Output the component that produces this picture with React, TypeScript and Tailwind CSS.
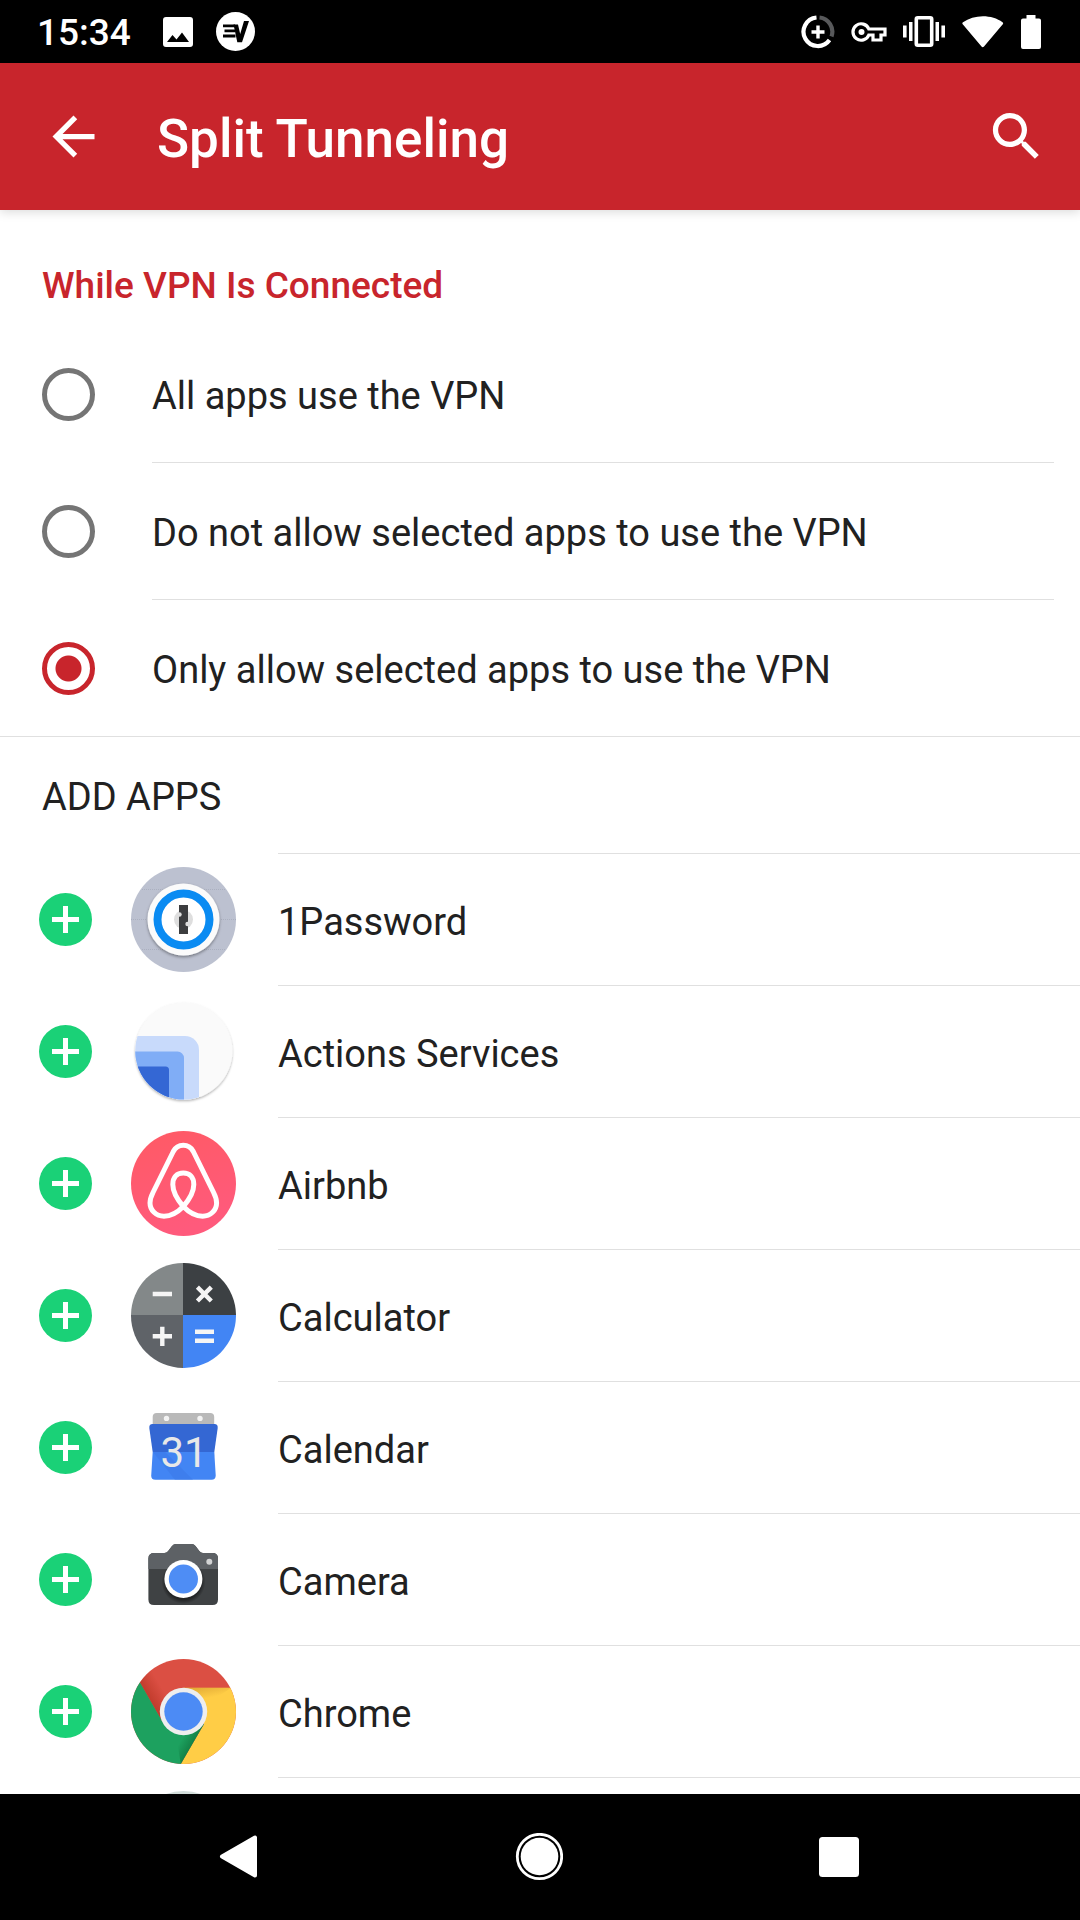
import React, { useState } from "react";

const options = [
  "All apps use the VPN",
  "Do not allow selected apps to use the VPN",
  "Only allow selected apps to use the VPN",
];

function OnePasswordIcon() {
  return (
    <>
      <defs>
        <filter id="op-shadow" x="-20%" y="-20%" width="140%" height="140%">
          <feDropShadow dx="0" dy="1.5" stdDeviation="1.5" floodOpacity="0.4" />
        </filter>
      </defs>
      <circle cx="52.5" cy="52.5" r="52.5" fill="#bcc1d0" />
      <path d="M0 52.5H105M11 22.5H94M11 82.5H94" stroke="#abb0c0" strokeWidth="1" strokeDasharray="1 1" />
      <circle cx="52.5" cy="52.5" r="36" fill="#fbfbfb" filter="url(#op-shadow)" />
      <circle cx="52.5" cy="52.5" r="26" fill="#fff" stroke="#0a8bf2" strokeWidth="8" />
      <circle cx="52.5" cy="52.5" r="9.5" fill="#dedede" />
      <rect x="48" y="38" width="9" height="29" fill="#3c3d3f" />
      <circle cx="48.5" cy="47.5" r="2.2" fill="#dedede" />
      <circle cx="56.5" cy="57" r="2.2" fill="#dedede" />
    </>
  );
}

function ActionsIcon() {
  return (
    <>
      <defs>
        <clipPath id="act-clip">
          <circle cx="52.8" cy="52" r="48.6" />
        </clipPath>
        <filter id="act-shadow" x="-20%" y="-20%" width="140%" height="140%">
          <feDropShadow dx="0" dy="1.5" stdDeviation="1" floodOpacity="0.3" />
        </filter>
      </defs>
      <circle cx="52.8" cy="52" r="48.6" fill="#fafafa" filter="url(#act-shadow)" />
      <g clipPath="url(#act-clip)">
        <path d="M0 37H54a14 14 0 0 1 14 14V105H0Z" fill="#c8dafb" />
        <path d="M0 52.5H46.5a6.5 6.5 0 0 1 6.5 6.5V105H0Z" fill="#80adf6" />
        <path d="M0 67.5H34.5a3.5 3.5 0 0 1 3.5 3.5V105H0Z" fill="#3467d4" />
      </g>
    </>
  );
}

function AirbnbIcon() {
  return (
    <>
      <defs>
        <linearGradient id="bnb" x1="0" y1="0" x2="0.3" y2="1">
          <stop offset="0" stopColor="#ff5a64" />
          <stop offset="1" stopColor="#ff5a7c" />
        </linearGradient>
      </defs>
      <circle cx="52.5" cy="52.5" r="52.5" fill="url(#bnb)" />
      <path
        d="M52.3 75.5C46 82 40 85.2 33 85.2C25 85.2 19 79.2 19 72C19 68 20 65.500 22 61.5L42.3 20.5C44.5 16.3 48 14.3 52.3 14.3C56.6 14.3 60.1 16.3 62.3 20.5L82.6 61.5C84.6 65.5 85.6 68 85.6 72C85.6 79.2 79.6 85.2 71.6 85.2C64.6 85.2 58.6 82 52.3 75.5C45 67 41.8 60 41.8 53.5C41.8 46 46 42 52.3 42C58.6 42 62.8 46 62.8 53.5C62.8 60 59.6 67 52.3 75.5Z"
        fill="none"
        stroke="#fff"
        strokeWidth="5"
        strokeLinejoin="round"
      />
    </>
  );
}

function CalculatorIcon() {
  return (
    <>
      <path d="M52 0A52.5 52.5 0 0 0 0 52H52Z" fill="#838889" />
      <path d="M52 0A52.5 52.5 0 0 1 105 52H52Z" fill="#3c4043" />
      <path d="M0 52A52.5 52.5 0 0 0 52 105V52Z" fill="#5f6368" />
      <path d="M105 52A52.5 52.5 0 0 1 52 105V52Z" fill="#4285f4" />
      <path
        d="M21.7 31H41M66.4 24.1L80.3 38M80.3 24.1L66.4 38M21.7 73.3H41M31.3 63.7V83M64 68.7H83M64 77.7H83"
        stroke="#f5f5f5"
        strokeWidth="4.4"
      />
    </>
  );
}

function CalendarIcon() {
  return (
    <>
      <rect x="21.7" y="18" width="61.5" height="18" rx="4" fill="#b9b9b9" />
      <circle cx="35.5" cy="23.4" r="2.7" fill="#f3f3f3" />
      <circle cx="69" cy="23.4" r="2.7" fill="#f3f3f3" />
      <path d="M21.5 29H83.5Q87 29 86.7 33L83.3 57H21.7L18.3 33Q18 29 21.5 29Z" fill="#3467d3" />
      <path d="M21.7 57H83.3L84.7 80.5Q84.7 84.7 80.5 84.7H24.5Q20 84.7 20.2 80.5Z" fill="#4285f4" />
      <path d="M22 57H34L62 84.7H44Z" fill="#3a77e6" opacity="0.5" />
      <text x="53" y="72.3" textAnchor="middle" fontFamily="Roboto, sans-serif" fontSize="42" fill="#e8e8e8">
        31
      </text>
    </>
  );
}

function CameraIcon() {
  return (
    <>
      <defs>
        <clipPath id="cam">
          <path d="M23.3 26H33.5Q35.7 26 37 24.3L41 19Q42.5 17 45 17H60.5Q63 17 64.5 19L68.5 24.3Q69.7 26 72 26H81.5Q87 26 87 31.5V72.5Q87 78 81.5 78H23Q17.4 78 17.4 72.5V31.5Q17.4 26 23.3 26Z" />
        </clipPath>
        <radialGradient id="cam-shade">
          <stop offset="0.8" stopColor="#000" stopOpacity="0.45" />
          <stop offset="1" stopColor="#000" stopOpacity="0" />
        </radialGradient>
      </defs>
      <g clipPath="url(#cam)">
        <rect width="105" height="105" fill="#3f4244" />
        <rect width="105" height="42" fill="#5d6165" />
        <circle cx="52.5" cy="55" r="22" fill="url(#cam-shade)" />
      </g>
      <circle cx="52.4" cy="52" r="19" fill="#fff" />
      <circle cx="52.4" cy="52" r="14.6" fill="#4e8df5" />
      <circle cx="78.3" cy="34.7" r="3" fill="#d2d3d4" />
    </>
  );
}

function ChromeIcon() {
  return (
    <>
      <defs>
        <clipPath id="chr">
          <circle cx="52.5" cy="52.5" r="52.5" />
        </clipPath>
        <linearGradient id="chr-red" gradientUnits="userSpaceOnUse" x1="19" y1="43" x2="34" y2="34">
          <stop offset="0" stopColor="#a52714" stopOpacity="0.5" />
          <stop offset="1" stopColor="#a52714" stopOpacity="0" />
        </linearGradient>
        <linearGradient id="chr-yel" gradientUnits="userSpaceOnUse" x1="60" y1="28" x2="63" y2="42">
          <stop offset="0" stopColor="#b87a20" stopOpacity="0.45" />
          <stop offset="1" stopColor="#b87a20" stopOpacity="0" />
        </linearGradient>
        <linearGradient id="chr-grn" gradientUnits="userSpaceOnUse" x1="62" y1="84" x2="52" y2="78">
          <stop offset="0" stopColor="#055524" stopOpacity="0.4" />
          <stop offset="1" stopColor="#055524" stopOpacity="0" />
        </linearGradient>
      </defs>
      <g clipPath="url(#chr)">
        <rect width="105" height="105" fill="#db4f43" />
        <path d="M9 23.5L31 62L52.5 52.5V28.7L40 0H0Z" fill="url(#chr-red)" />
        <path d="M52.5 28.7H105V105H49.8L73 65Z" fill="#ffcd46" />
        <path d="M52.5 28.7H100L75 46Z" fill="url(#chr-yel)" />
        <path d="M0 8L9 23.5L31 62L73 65L49.8 105H0Z" fill="#1da15f" />
        <path d="M45 75L73 65L49.8 105Z" fill="url(#chr-grn)" />
      </g>
      <circle cx="52.5" cy="52.5" r="23.7" fill="#eee" />
      <circle cx="52.5" cy="52.5" r="19.2" fill="#4c8bf5" />
    </>
  );
}

function PaleIcon() {
  return <circle cx="52.5" cy="52.5" r="52.5" fill="#d3dedb" />;
}

const apps = [
  { name: "1Password", Icon: OnePasswordIcon },
  { name: "Actions Services", Icon: ActionsIcon },
  { name: "Airbnb", Icon: AirbnbIcon },
  { name: "Calculator", Icon: CalculatorIcon },
  { name: "Calendar", Icon: CalendarIcon },
  { name: "Camera", Icon: CameraIcon },
  { name: "Chrome", Icon: ChromeIcon },
  { name: "", Icon: PaleIcon },
];

function StatusBar() {
  return (
    <div className="flex h-[63px] shrink-0 items-center justify-between bg-black pr-[39px] pl-[37px] text-white">
      <div className="flex items-center">
        <span className="w-[126px] pt-0.5 text-[37px] leading-[44px] font-medium">15:34</span>
        <svg className="mr-[23px] size-[30px]" viewBox="0 0 30 30" aria-hidden="true">
          <path
            fillRule="evenodd"
            fill="#fff"
            d="M3 0H27Q30 0 30 3V27Q30 30 27 30H3Q0 30 0 27V3Q0 0 3 0ZM4 25H26L19 15.5L13.5 22.5L9.5 18Z"
          />
        </svg>
        <svg className="size-[39px]" viewBox="0 0 39 39" aria-hidden="true">
          <circle cx="19.5" cy="19.5" r="19.5" fill="#fff" />
          <path d="M7 13.8H19M8.5 18.9H19M7 24H19.5" stroke="#000" strokeWidth="2.8" />
          <path d="M17.5 12.4H22L24.2 22L28 9H33L26 30.2H21.3Z" />
        </svg>
      </div>
      <div className="flex items-center gap-4">
        <svg className="h-[34px] w-[34px]" viewBox="0 0 34 34" fill="none" aria-hidden="true">
          <path d="M15.5 2.5A14.3 14.3 0 1 0 28.5 25" stroke="#fff" strokeWidth="4.2" />
          <path d="M18.5 2.5A14.3 14.3 0 0 1 30.5 21.5" stroke="#58595b" strokeWidth="4.2" />
          <path d="M10.5 17H23.5M17 10.5V23.5" stroke="#fff" strokeWidth="3.4" />
        </svg>
        <svg className="h-[20px] w-[36px]" viewBox="0 0 36 20" fill="none" aria-hidden="true">
          <path d="M17.8 7A8.2 8.2 0 1 0 17.8 13H22V18H30V13H34V7Z" stroke="#fff" strokeWidth="3.2" />
          <circle cx="10.5" cy="10" r="3" fill="#fff" />
        </svg>
        <svg className="h-[31px] w-[42px]" viewBox="0 0 42 31" fill="#fff" aria-hidden="true">
          <path d="M0 9.500H3.6V21.5H0ZM6 6H9.5V25H6ZM32.5 6H36V25H32.5ZM38.4 9.5H42V21.5H38.4Z" />
          <rect x="13.3" y="1.8" width="15.4" height="27.4" rx="1.5" fill="none" stroke="#fff" strokeWidth="3.6" />
        </svg>
        <svg className="h-[32px] w-[44px]" viewBox="0 0 44 32" fill="#fff" aria-hidden="true">
          <path d="M1.5 8Q1 7 2 6.2C13 -1.8 31 -1.8 41.5 6.2Q42.5 7 42 8L23 30.5Q21.7 32 20.5 30.5Z" />
        </svg>
        <svg className="h-[34px] w-[20px]" viewBox="0 0 20 34" fill="#fff" aria-hidden="true">
          <path d="M5.5 0H14.5V3.5H18Q20 3.5 20 5.5V32Q20 34 18 34H2Q0 34 0 32V5.5Q0 3.5 2 3.5H5.5Z" />
        </svg>
      </div>
    </div>
  );
}

export default function App() {
  const [mode, setMode] = useState(2);
  return (
    <div className="flex h-screen flex-col overflow-hidden bg-white font-['Roboto',sans-serif] text-[#212121]">
      <StatusBar />
      <header className="z-10 flex h-[147px] shrink-0 items-center bg-[#c8252c] px-8 text-white shadow-[0_2px_10px_rgba(0,0,0,0.15)]">
        <button type="button" aria-label="Back" className="ml-[10px]">
          <svg className="size-[63px]" viewBox="0 0 24 24" fill="currentColor" aria-hidden="true">
            <path d="M20 11H7.83l5.59-5.59L12 4l-8 8 8 8 1.41-1.41L7.83 13H20v-2z" />
          </svg>
        </button>
        <h1 className="ml-[52px] flex-1 pt-1 text-[53px] leading-[62px] font-medium">Split Tunneling</h1>
        <button type="button" aria-label="Search">
          <svg className="size-[63px]" viewBox="0 0 24 24" fill="currentColor" aria-hidden="true">
            <path d="M15.5 14h-.79l-.28-.27C15.41 12.59 16 11.11 16 9.5 16 5.91 13.09 3 9.5 3S3 5.91 3 9.5 5.91 16 9.5 16c1.61 0 3.09-.59 4.23-1.57l.27.28v.79l5 4.99L20.49 19l-4.99-5zm-6 0C7.01 14 5 11.99 5 9.5S7.01 5 9.5 5 14 7.01 14 9.5 11.99 14 9.5 14z" />
          </svg>
        </button>
      </header>

      <main className="min-h-0 flex-1 overflow-hidden">
        <fieldset>
          <legend className="px-[42px] pt-[54px] pb-[18px] text-[37px] leading-[44px] font-medium text-[#c8252c]">
            While VPN Is Connected
          </legend>
          {options.map((label, i) => (
            <div key={label}>
              <label className="flex h-[136px] items-center pl-[42px]">
                <input
                  type="radio"
                  name="mode"
                  checked={mode === i}
                  onChange={() => setMode(i)}
                  className="size-[53px] shrink-0 appearance-none rounded-full border-[5px] border-[#757575] checked:border-[#c8252c] checked:bg-[radial-gradient(circle,#c8252c_12.5px,transparent_13.5px)]"
                />
                <span className="ml-[57px] pt-1 text-[38px] leading-[44px]">{label}</span>
              </label>
              <div className={i < 2 ? "mr-[26px] ml-[152px] h-px bg-[#e0e0e0]" : "h-px bg-[#e0e0e0]"} />
            </div>
          ))}
        </fieldset>

        <h2 className="px-[42px] pt-[38px] pb-[34px] text-[38px] leading-[44px]">ADD APPS</h2>
        <ul>
          {apps.map(({ name, Icon }) => (
            <li key={name}>
              <div className="ml-[278px] h-px bg-[#e0e0e0]" />
              <div className="flex h-[131px] items-center pl-[39px]">
                <button type="button" aria-label={"Add " + name}>
                  <svg className="size-[53px]" viewBox="0 0 53 53" aria-hidden="true">
                    <circle cx="26.5" cy="26.5" r="26.5" fill="#1ad177" />
                    <path d="M13 26.5H40M26.5 13V40" stroke="#fff" strokeWidth="5" />
                  </svg>
                </button>
                <svg className="ml-[39px] size-[105px] shrink-0" viewBox="0 0 105 105" aria-hidden="true">
                  <Icon />
                </svg>
                <span className="ml-[42px] pt-1 text-[38px] leading-[44px]">{name}</span>
              </div>
            </li>
          ))}
        </ul>
      </main>

      <nav className="flex h-[126px] shrink-0 items-center bg-black pr-[90px] pl-[88px]">
        <button type="button" aria-label="Back" className="flex flex-1 justify-center">
          <svg className="size-[48px]" viewBox="0 0 48 48" aria-hidden="true">
            <path d="M8 23.5L41 4.5V42.5Z" fill="#fff" stroke="#fff" strokeWidth="4" strokeLinejoin="round" />
          </svg>
        </button>
        <button type="button" aria-label="Home" className="flex flex-1 justify-center">
          <svg className="size-[48px]" viewBox="0 0 48 48" aria-hidden="true">
            <circle cx="24.500" cy="23.5" r="22.2" fill="none" stroke="#fff" strokeWidth="2.8" />
            <circle cx="24.500" cy="23.5" r="18.8" fill="#fff" />
          </svg>
        </button>
        <button type="button" aria-label="Recent apps" className="flex flex-1 justify-center">
          <svg className="size-[48px]" viewBox="0 0 48 48" aria-hidden="true">
            <rect x="3" y="4" width="40" height="40" rx="3.5" fill="#fff" />
          </svg>
        </button>
      </nav>
    </div>
  );
}
